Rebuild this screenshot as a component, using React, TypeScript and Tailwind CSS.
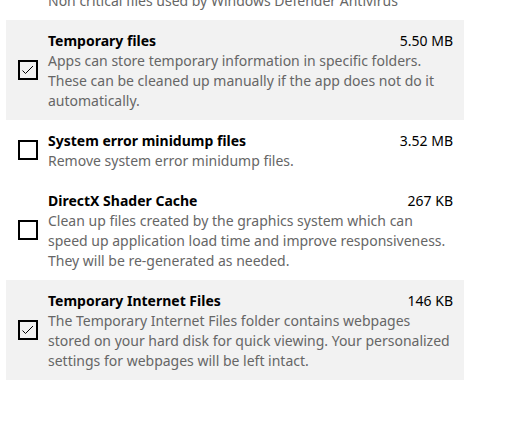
import React from "react";

type Item = {
  title: string;
  size: string;
  desc: string[];
  checked: boolean;
};

const items: Item[] = [
  {
    title: "Temporary files",
    size: "5.50 MB",
    desc: [
      "Apps can store temporary information in specific folders.",
      "These can be cleaned up manually if the app does not do it",
      "automatically.",
    ],
    checked: true,
  },
  {
    title: "System error minidump files",
    size: "3.52 MB",
    desc: ["Remove system error minidump files."],
    checked: false,
  },
  {
    title: "DirectX Shader Cache",
    size: "267 KB",
    desc: [
      "Clean up files created by the graphics system which can",
      "speed up application load time and improve responsiveness.",
      "They will be re-generated as needed.",
    ],
    checked: false,
  },
  {
    title: "Temporary Internet Files",
    size: "146 KB",
    desc: [
      "The Temporary Internet Files folder contains webpages",
      "stored on your hard disk for quick viewing. Your personalized",
      "settings for webpages will be left intact.",
    ],
    checked: true,
  },
];

function Checkbox({ checked }: { checked: boolean }) {
  return (
    <div className="w-[20px] h-[20px] border-2 border-black shrink-0 flex items-center justify-center">
      {checked && (
        <svg width="16" height="16" viewBox="0 0 16 16" fill="none">
          <path d="M2.5 8.5 L5.5 11.5 L13 4" stroke="#000" strokeWidth="1" />
        </svg>
      )}
    </div>
  );
}

export default function App() {
  return (
    <div
      className="w-[516px] h-[421px] bg-white overflow-hidden text-[14px] leading-[20px]"
      style={{ fontFamily: '"Noto Sans", "Open Sans", sans-serif' }}
    >
      <div className="-mt-[9px] pl-[48px] pb-[9px] text-[#666666]">
        Non critical files used by Windows Defender Antivirus
      </div>
      <div className="w-[458px] ml-[6px]">
        {items.map((it) => (
          <div
            key={it.title}
            className={`flex items-center gap-[10px] pl-[12px] pr-[11px] py-[10px] ${
              it.checked ? "bg-[#f2f2f2]" : "bg-white"
            }`}
          >
            <Checkbox checked={it.checked} />
            <div className="flex-1 min-w-0 pt-px -mb-px">
              <div className="flex justify-between">
                <span className="font-bold text-black">{it.title}</span>
                <span className="text-black">{it.size}</span>
              </div>
              {it.desc.map((l) => (
                <div key={l} className="text-[#666666] whitespace-nowrap">
                  {l}
                </div>
              ))}
            </div>
          </div>
        ))}
      </div>
    </div>
  );
}
